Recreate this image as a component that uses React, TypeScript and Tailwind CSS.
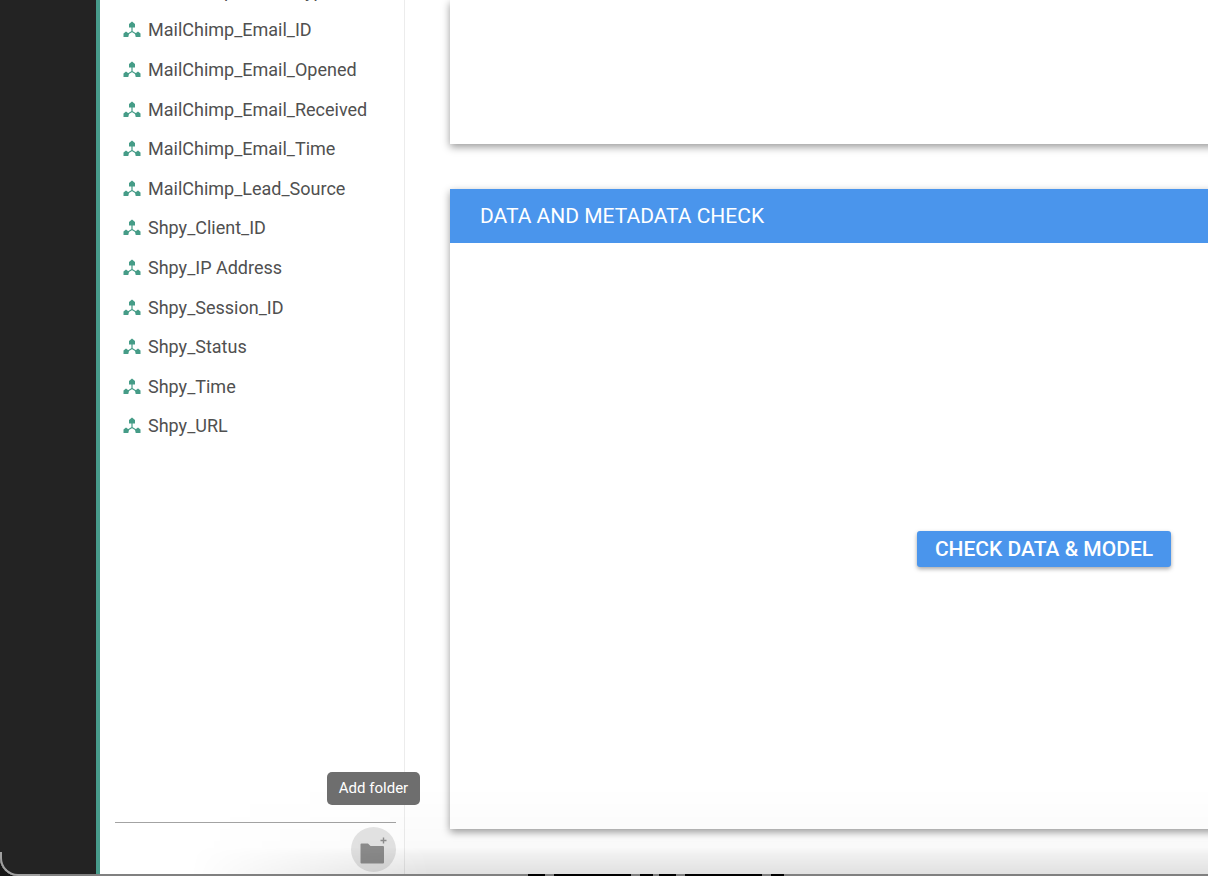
const FIELDS = [
  "MailChimp_Email_Type",
  "MailChimp_Email_ID",
  "MailChimp_Email_Opened",
  "MailChimp_Email_Received",
  "MailChimp_Email_Time",
  "MailChimp_Lead_Source",
  "Shpy_Client_ID",
  "Shpy_IP Address",
  "Shpy_Session_ID",
  "Shpy_Status",
  "Shpy_Time",
  "Shpy_URL",
];

function NodeIcon() {
  return (
    <svg width="18" height="17" viewBox="0 0 18 17" className="shrink-0" fill="#459c87">
      <path d="M9 6V10.500M9 10.500L4 13.500M9 10.500L14 13.500" stroke="#459c87" strokeWidth="1.2" fill="none" />
      <path d="M9 0.500L12 3V6.500H6V3Z" />
      <path d="M3 10.500L6 12.800L5.300 16H0.500V12.500Z" />
      <path d="M15 10.500L17.500 12.500V16H12.700L12 12.800Z" />
    </svg>
  );
}

function FieldRow({ name }: { name: string }) {
  return (
    <div className="flex h-[39.6px] items-center gap-[7px] pl-[23px]">
      <NodeIcon />
      <span className="text-[18px] text-[#505050] whitespace-nowrap">{name}</span>
    </div>
  );
}

export default function App() {
  return (
    <div className="relative h-[876px] w-[1208px] overflow-hidden bg-[#161616] font-['Roboto',sans-serif]">
      <div className="flex h-full overflow-hidden rounded-bl-[18px] bg-white">
        <div className="w-[96px] shrink-0 bg-[#232323]" />
        <aside className="flex w-[309px] shrink-0 flex-col border-l-4 border-r border-l-[#479b8b] border-r-[#ececec] bg-white">
          <div className="-mt-[29.5px] flex-1">
            {FIELDS.map((f) => (
              <FieldRow key={f} name={f} />
            ))}
          </div>
          <div className="ml-[15px] mr-[8px] flex h-[54px] justify-end border-t border-[#a3a3a3] pt-[4px]">
            <div className="flex h-[45px] w-[45px] items-center justify-center rounded-full bg-[#e4e4e4]">
              <svg width="28" height="28" viewBox="0 0 28 28" fill="#8d8d8d">
                <path d="M0.500 8.500a1 1 0 0 1 1-1h6.500l2.500 2.500H23a1 1 0 0 1 1 1V26.500a1 1 0 0 1-1 1H1.500a1 1 0 0 1-1-1Z" />
                <path d="M22.800 1.500h1.400v2.300h2.300v1.400h-2.300v2.300h-1.400V5.200h-2.300V3.800h2.300Z" />
              </svg>
            </div>
          </div>
        </aside>
        <main className="flex-1 pl-[45px]">
          <div className="h-[144px] w-[1188px] bg-white shadow-[0_3px_8px_rgba(0,0,0,0.4)]" />
          <section className="mt-[45px] flex h-[640px] w-[1188px] flex-col bg-white shadow-[0_3px_8px_rgba(0,0,0,0.4)]">
            <h2 className="flex h-[54px] items-center bg-[#4a95ec] pl-[30px] pt-[2px] text-[21px] font-normal text-white">
              DATA AND METADATA CHECK
            </h2>
            <div className="flex flex-1 items-start justify-center pt-[288px]">
              <button className="flex h-[36px] w-[254px] items-center justify-center rounded-[3px] bg-[#4a95ec] pt-[2px] text-[21px] font-medium text-white shadow-[0_2px_4px_rgba(0,0,0,0.35)]">
                CHECK DATA &amp; MODEL
              </button>
            </div>
          </section>
        </main>
      </div>
      {/* window shadow from the screen edge, sits over everything */}
      <div className="pointer-events-none absolute bottom-0 left-[100px] right-0 h-[90px] bg-[linear-gradient(to_bottom,transparent_0%,rgba(0,0,0,0.02)_68%,rgba(0,0,0,0.06)_76%,rgba(0,0,0,0.125)_100%)] [mask-image:linear-gradient(to_right,transparent_90px,black_330px)]" />
      {/* dock edge peeking through at the very bottom */}
      <div className="pointer-events-none absolute bottom-0 left-[18px] right-0 flex h-[2px] bg-[#808080] pl-[510px]">
        <div className="w-[17px] bg-black" />
        <div className="ml-[9px] w-[77px] bg-black" />
        <div className="ml-[9px] w-[13px] bg-black" />
        <div className="ml-[6px] w-[17px] bg-black" />
        <div className="ml-[9px] w-[77px] bg-black" />
        <div className="ml-[9px] w-[13px] bg-black" />
      </div>
      <div className="pointer-events-none absolute bottom-0 left-0 h-[24px] w-[40px] rounded-bl-[18px] border-b-2 border-l-2 border-[#a0a0a0]" />
      <div className="absolute left-[327px] top-[772px] flex h-[33px] w-[93px] items-center justify-center rounded-[5px] bg-[#6e6e6e] text-[15px] text-white">
        Add folder
      </div>
    </div>
  );
}
